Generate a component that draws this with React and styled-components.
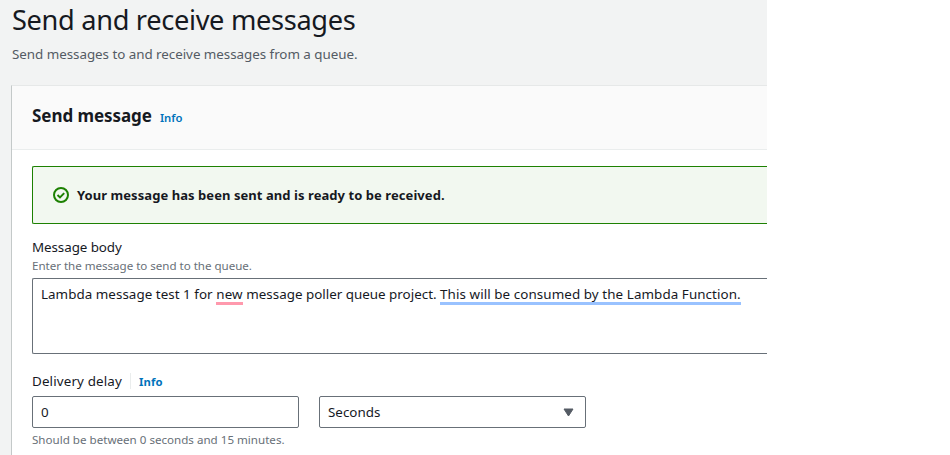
import React from 'react';
import styled, { createGlobalStyle } from 'styled-components';

const GlobalStyle = createGlobalStyle`
  *, *::before, *::after { box-sizing: border-box; }
  body {
    margin: 0;
    background: #fff;
    color: #16191f;
    font: 400 13.4px/22px "Noto Sans", "Open Sans", sans-serif;
  }
`;

const Page = styled.main`
  width: 767px;
  height: 455px;
  overflow: hidden;
  padding: 4px 0 0 11px;
  background: #f2f3f3;
`;

const Title = styled.h1`
  margin: 0 0 0 1px;
  font-size: 27.2px;
  font-weight: 400;
  line-height: 32px;
  letter-spacing: -0.32px;
  white-space: nowrap;
`;

const Subtitle = styled.p`
  margin: 7px 0 0 1px;
  color: #545b64;
  letter-spacing: -0.04px;
`;

const Card = styled.section`
  margin-top: 20px;
  height: 400px;
  background: #fff;
  border-top: 1px solid #e6e8e8;
  border-left: 1px solid #c4c9c9;
`;

const CardHeader = styled.header`
  display: flex;
  align-items: baseline;
  gap: 8px;
  height: 64px;
  padding: 19px 20px 0;
  background: #fafafa;
  border-bottom: 1px solid #eaeded;
`;

const Heading = styled.h2`
  margin: 0;
  font-size: 17px;
  font-weight: 700;
  line-height: 22px;
  letter-spacing: -0.06px;
`;

const InfoLink = styled.a`
  color: #0073bb;
  font-size: 11.3px;
  font-weight: ${({ $strong }) => ($strong ? 700 : 600)};
  line-height: 16px;
`;

const CardBody = styled.div`
  padding: 16px 0 0 20px;
`;

const Alert = styled.div`
  display: flex;
  align-items: center;
  gap: 8px;
  height: 58px;
  padding-left: 20px;
  background: #f2f8f0;
  border: 1px solid #1d8102;
  border-right: 0;
  border-radius: 2px 0 0 2px;
  font-size: 13px;
  font-weight: 700;
  letter-spacing: 0.06px;
`;

const StatusIcon = styled.svg`
  width: 16px;
  height: 16px;
  fill: none;
  stroke: #1d8102;
  stroke-width: 2;
`;

const Field = styled.div`
  margin-top: ${({ $gap }) => $gap}px;
`;

const Label = styled.div`
  display: flex;
  align-items: center;
  height: 22px;
  letter-spacing: ${({ $tracking }) => $tracking}px;
`;

const LabelInfo = styled.span`
  display: flex;
  align-items: center;
  height: 16px;
  margin-left: 8px;
  padding: 2px 0 0 8px;
  border-left: 1px solid #eaeded;
`;

const Hint = styled.div`
  color: #687078;
  font-size: 11.6px;
  line-height: 16px;
  letter-spacing: ${({ $tracking }) => $tracking}px;
`;

const MessageBox = styled.div`
  height: 76px;
  margin-top: 4px;
  padding: 5px 8px;
  background: #fff;
  border: 1px solid #687078;
  border-right: 0;
  border-radius: 2px 0 0 2px;
  white-space: pre;
`;

const Phrase = styled.span`
  display: inline-block;
  height: 21px;
  line-height: 20px;
  vertical-align: top;
  letter-spacing: ${({ $tracking = 0 }) => $tracking}px;
  ${({ $mark }) => $mark && `border-bottom: 3px solid ${$mark};`}
`;

const Controls = styled.div`
  display: flex;
  gap: 20px;
  margin: 4px 0;
`;

const Control = styled.div`
  display: flex;
  align-items: center;
  justify-content: space-between;
  width: 267px;
  height: 32px;
  padding: 0 11px 0 8px;
  background: #fff;
  border: 1px solid #687078;
  border-radius: 2px;
`;

const Caret = styled.svg`
  width: 11px;
  height: 9px;
  fill: #545b64;
  stroke: #545b64;
  stroke-linejoin: round;
`;

export default function App() {
  return (
    <>
      <GlobalStyle />
      <Page>
        <Title>Send and receive messages</Title>
        <Subtitle>Send messages to and receive messages from a queue.</Subtitle>
        <Card>
          <CardHeader>
            <Heading>Send message</Heading>
            <InfoLink>Info</InfoLink>
          </CardHeader>
          <CardBody>
            <Alert>
              <StatusIcon viewBox="0 0 16 16">
                <circle cx="8" cy="8" r="7" />
                <path d="M4.5 8l2.5 2.4 4.2-4.3" />
              </StatusIcon>
              Your message has been sent and is ready to be received.
            </Alert>
            <Field $gap={12}>
              <Label $tracking={-0.08}>Message body</Label>
              <Hint $tracking={-0.03}>Enter the message to send to the queue.</Hint>
              <MessageBox>
                <Phrase $tracking={0.04}>{'Lambda message test 1 for '}</Phrase>
                <Phrase $tracking={0.15} $mark="#ff99ad">new</Phrase>
                <Phrase>{' message poller queue project. '}</Phrase>
                <Phrase $tracking={0.08} $mark="#99c2ff">This will be consumed by the Lambda Function.</Phrase>
              </MessageBox>
            </Field>
            <Field $gap={16}>
              <Label $tracking={0.14}>
                Delivery delay
                <LabelInfo><InfoLink $strong>Info</InfoLink></LabelInfo>
              </Label>
              <Controls>
                <Control>0</Control>
                <Control>
                  Seconds
                  <Caret viewBox="0 0 11 9"><path d="M1 1h9L5.5 8z" /></Caret>
                </Control>
              </Controls>
              <Hint $tracking={0}>Should be between 0 seconds and 15 minutes.</Hint>
            </Field>
          </CardBody>
        </Card>
      </Page>
    </>
  );
}
